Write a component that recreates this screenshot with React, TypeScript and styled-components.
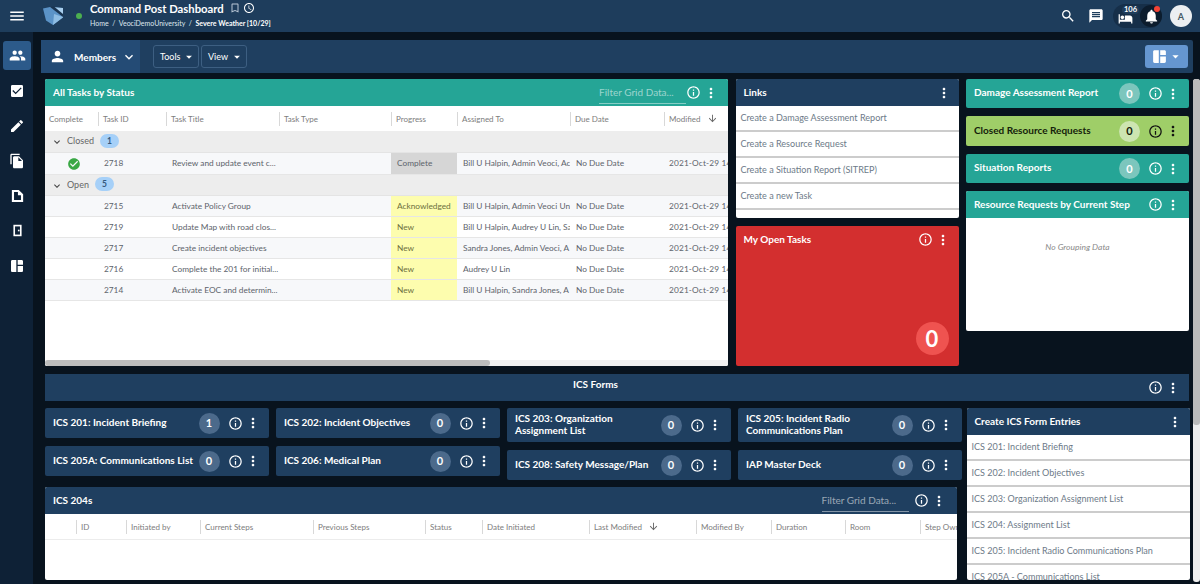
import React from 'react';
import styled, { createGlobalStyle } from 'styled-components';
import {
  MdMenu, MdSearch, MdMessage, MdHotel, MdNotifications, MdPeople, MdCheckBox, MdEdit, MdFileCopy,
  MdSpaceDashboard, MdPerson, MdKeyboardArrowDown, MdArrowDropDown, MdInfoOutline, MdMoreVert,
  MdCheckCircle, MdArrowDownward, MdBookmarkBorder, MdOutlineAccessTime,
} from 'react-icons/md';

const NAVY = '#1f3f60';
const TEAL = '#25a596';
const GREEN = '#9fce68';
const RED = '#d32f2f';

const GlobalStyle = createGlobalStyle`
  html, body { margin: 0; padding: 0; background: #08131e; overflow: hidden; }
  body { font-family: Lato, "Open Sans", sans-serif; }
  * { box-sizing: border-box; }
`;

const Page = styled.div`
  width: 1200px;
  height: 584px;
  display: flex;
  flex-direction: column;
  overflow: hidden;
`;

const Header = styled.header`
  height: 32px;
  flex: none;
  display: flex;
  align-items: center;
  background: #1e3d5c;
  color: #fff;
  padding-right: 8px;
`;

const MenuSlot = styled.div`
  width: 43px;
  display: flex;
  padding-left: 8px;
  font-size: 18px;
`;

const LogoSvg = styled.svg`
  width: 20px;
  height: 20px;
  flex: none;
`;

const StatusDot = styled.span`
  width: 6px;
  height: 6px;
  border-radius: 50%;
  background: #4caf50;
  margin: 0 8px 0 13px;
  flex: none;
`;

const TitleBlock = styled.div`
  display: flex;
  flex-direction: column;
  flex: 1;
  margin-top: -3px;
`;

const TitleRow = styled.div`
  display: flex;
  align-items: center;
  gap: 2px;
  font-size: 11.3px;
  font-weight: 700;
  line-height: 15px;
  svg { font-size: 12px; }
  svg:first-of-type { margin-left: 3px; color: #b9c7d6; }
`;

const Crumbs = styled.div`
  font-size: 7px;
  line-height: 11px;
  margin-top: 2px;
  color: #dfe7ef;
  b { color: #fff; }
`;

const HeaderIcon = styled.div<{ $gap?: number }>`
  display: flex;
  font-size: 16px;
  margin-right: ${p => p.$gap ?? 12}px;
`;

const NotifyPill = styled.div`
  width: 49px;
  height: 24px;
  border-radius: 12px;
  background: #162f49;
  display: flex;
  align-items: center;
  justify-content: space-between;
  padding-left: 5px;
  margin-right: 8px;
  position: relative;
`;

const BedCount = styled.span`
  position: absolute;
  left: 9px;
  top: 2px;
  font-size: 7.5px;
  font-weight: 700;
  line-height: 8px;
  background: #1e3d5c;
  border-radius: 4px;
  padding: 0 2px;
`;

const BedIcon = styled.div`
  display: flex;
  font-size: 15px;
  margin-top: 5px;
`;

const BellCircle = styled.div`
  width: 22px;
  height: 22px;
  border-radius: 50%;
  background: #0c1c2d;
  display: flex;
  align-items: center;
  justify-content: center;
  font-size: 17px;
  position: relative;
`;

const RedDot = styled.span`
  position: absolute;
  top: 1px;
  right: 2px;
  width: 6px;
  height: 6px;
  border-radius: 50%;
  background: #f44336;
`;

const Avatar = styled.div`
  width: 22px;
  height: 22px;
  border-radius: 50%;
  background: #eceff1;
  color: #455a64;
  font-size: 9px;
  font-weight: 700;
  display: flex;
  align-items: center;
  justify-content: center;
`;

const Body = styled.div`
  flex: 1;
  display: flex;
  min-height: 0;
`;

const Sidebar = styled.nav`
  width: 33px;
  flex: none;
  background: #0e2136;
  padding: 9px 2px 0 3px;
  display: flex;
  flex-direction: column;
  gap: 6px;
`;

const SideItem = styled.div<{ $active?: boolean }>`
  height: 29px;
  border-radius: 3px;
  display: flex;
  align-items: center;
  justify-content: center;
  color: #fff;
  font-size: ${p => (p.$active ? 17 : 16)}px;
  background: ${p => (p.$active ? '#2c5a8a' : 'transparent')};
`;

const Main = styled.main`
  flex: 1;
  min-width: 0;
  padding-top: 8px;
  padding-left: 8px;
  display: flex;
  flex-direction: column;
`;

const Toolbar = styled.div`
  width: 1152px;
  height: 33px;
  flex: none;
  background: ${NAVY};
  border-radius: 2px;
  display: flex;
  align-items: center;
  color: #fff;
  padding-right: 5px;
`;

const MembersTab = styled.div`
  width: 99px;
  height: 100%;
  background: #244b75;
  display: flex;
  align-items: center;
  padding-left: 8px;
  font-size: 10px;
  font-weight: 700;
  margin-right: 13px;
  svg:first-child { font-size: 17px; margin-right: 8px; }
  svg:last-child { font-size: 16px; margin-left: 5px; }
`;

const ToolButton = styled.div`
  width: 46px;
  height: 23px;
  border: 1px solid #3d5f82;
  border-radius: 3px;
  display: flex;
  align-items: center;
  justify-content: space-between;
  padding: 0 2px 0 6px;
  margin-right: 2px;
  font-size: 9px;
  svg { font-size: 14px; }
`;

const LayoutButton = styled.div`
  width: 43px;
  height: 23px;
  margin-left: auto;
  border-radius: 3px;
  background: #6596d0;
  display: flex;
  align-items: center;
  justify-content: center;
  svg:first-child { font-size: 17px; }
  svg:last-child { font-size: 15px; }
`;

const Workspace = styled.div`
  flex: 1;
  min-height: 0;
  display: flex;
  padding-top: 6px;
`;

const Content = styled.div`
  width: 1152px;
  padding: 0 4px;
  display: flex;
  flex-direction: column;
`;

const ScrollTrack = styled.div`
  width: 7px;
  margin-bottom: 2px;
  border-radius: 3px;
  background: #eeeeee;
`;

const ScrollThumb = styled.div`
  height: 346px;
  border-radius: 3px;
  background: #bbbbbb;
`;

const TopGrid = styled.div`
  height: 287px;
  flex: none;
  display: grid;
  grid-template-columns: 683px 223px 223px;
  column-gap: 7.5px;
`;

const Panel = styled.section<{ $height?: number }>`
  background: #fff;
  border-radius: 2px;
  overflow: hidden;
  display: flex;
  flex-direction: column;
  ${p => (p.$height ? `height: ${p.$height}px; flex: none;` : '')}
`;

const toneBg = { teal: TEAL, green: GREEN, navy: NAVY, red: RED };
type Tone = keyof typeof toneBg;

const PanelHead = styled.div<{ $tone: Tone }>`
  height: 27px;
  flex: none;
  background: ${p => toneBg[p.$tone]};
  color: #fff;
  display: flex;
  align-items: center;
  padding-left: 8px;
  font-size: 10px;
  font-weight: 700;
`;

const HeadTitle = styled.div`
  flex: 1;
  margin-top: -2px;
  white-space: nowrap;
`;

const FilterText = styled.div`
  width: 87px;
  height: 22px;
  border-bottom: 1px solid rgba(255, 255, 255, 0.45);
  color: rgba(255, 255, 255, 0.55);
  font-size: 10px;
  font-weight: 400;
  line-height: 21px;
  white-space: nowrap;
  overflow: hidden;
`;

const Actions = styled.div<{ $dark?: boolean; $lead?: number; $width?: number }>`
  width: ${p => p.$width ?? 43}px;
  flex: none;
  display: flex;
  align-items: center;
  color: ${p => (p.$dark ? '#111' : '#fff')};
  padding-left: ${p => p.$lead ?? 2}px;
`;

const MenuOnly = styled.div`
  width: 25px;
  flex: none;
  display: flex;
  color: #fff;
`;

const InfoIcon = styled(MdInfoOutline)`
  font-size: 15px;
  flex: none;
`;

const KebabIcon = styled(MdMoreVert)`
  font-size: 16px;
  flex: none;
  margin-left: 2px;
`;

const Columns = styled.div<{ $cols: string }>`
  display: grid;
  grid-template-columns: ${p => p.$cols};
  width: max-content;
`;

const HeadRow = styled(Columns)<{ $height: number; $rule?: boolean }>`
  height: ${p => p.$height}px;
  align-items: center;
  color: #7d7d7d;
  font-size: 8px;
  border-bottom: ${p => (p.$rule ? '1px solid #ececec' : 'none')};
`;

const HeadCell = styled.div<{ $first?: boolean }>`
  height: 14px;
  line-height: 14px;
  padding-left: 4px;
  white-space: nowrap;
  overflow: hidden;
  display: flex;
  align-items: center;
  gap: 6px;
  border-left: ${p => (p.$first ? 'none' : '1px solid #d8d8d8')};
  svg { font-size: 11px; color: #666; }
`;

const TableBody = styled.div`
  flex: 1;
  min-height: 0;
  overflow: hidden;
`;

const GroupRow = styled.div<{ $height: number }>`
  height: ${p => p.$height}px;
  width: 760px;
  background: #ededed;
  border-bottom: 1px solid #e4e4e4;
  display: flex;
  align-items: center;
  padding-left: 6px;
  padding-bottom: 2px;
  color: #666;
  font-size: 9px;
  svg { font-size: 12px; margin-right: 4px; margin-top: 3px; color: #444; }
`;

const GroupBadge = styled.span`
  width: 19px;
  height: 14px;
  border-radius: 7px;
  background: #a6d0f8;
  color: #35597c;
  font-size: 8.5px;
  font-weight: 700;
  text-align: center;
  line-height: 14px;
  margin-left: 6px;
`;

const DataRow = styled(Columns)<{ $height: number; $alt: boolean }>`
  height: ${p => p.$height}px;
  background: ${p => (p.$alt ? '#f7f8fa' : '#fff')};
  border-bottom: 1px solid #e6e6e6;
  color: #5d636b;
  font-size: 8.3px;
  line-height: 20px;
`;

const Cell = styled.div`
  padding-left: 6px;
  white-space: nowrap;
  overflow: hidden;
`;

const DateCell = styled(Cell)`
  padding-left: 5px;
  letter-spacing: 0.15px;
`;

const CheckCell = styled.div`
  display: flex;
  align-items: center;
  justify-content: center;
  padding-left: 5px;
  color: #3aa845;
  font-size: 14px;
`;

const ProgressCell = styled(Cell)<{ $done: boolean }>`
  background: ${p => (p.$done ? '#d6d6d6' : '#fdfdae')};
  color: ${p => (p.$done ? '#5d636b' : '#6d7140')};
`;

const HScroll = styled.div`
  height: 6px;
  flex: none;
  background: #f1f1f1;
`;

const HThumb = styled.div`
  width: 445px;
  height: 100%;
  background: #bdbdbd;
  border-radius: 3px;
`;

const Stack = styled.div`
  display: flex;
  flex-direction: column;
  gap: 8px;
`;

const LinkRow = styled.div`
  height: 26px;
  flex: none;
  border-bottom: 2px solid #cccccc;
  color: #6d7a88;
  font-size: 9.05px;
  line-height: 24px;
  padding-left: 5px;
  white-space: nowrap;
  overflow: hidden;
`;

const BigCard = styled.section`
  height: 140px;
  background: ${RED};
  border-radius: 2px;
  display: flex;
  flex-direction: column;
  color: #fff;
  font-size: 10px;
  font-weight: 700;
`;

const BigCardHead = styled.div`
  display: flex;
  align-items: center;
  height: 27px;
  padding-left: 8px;
`;

const BigCount = styled.div`
  width: 33px;
  height: 33px;
  margin: auto 10px 11px auto;
  border-radius: 50%;
  background: #ef5350;
  display: flex;
  align-items: center;
  justify-content: center;
  font-size: 22px;
`;

const Card = styled.div<{ $tone: Tone; $height: number }>`
  height: ${p => p.$height}px;
  flex: none;
  background: ${p => toneBg[p.$tone]};
  color: ${p => (p.$tone === 'green' ? '#14210a' : '#fff')};
  border-radius: 2px;
  display: flex;
  align-items: center;
  padding-left: 8px;
  font-size: 10px;
  font-weight: 700;
  line-height: 12px;
`;

const CardTitle = styled.div`
  flex: 1;
  min-width: 0;
  margin-top: -3px;
`;

const Count = styled.div<{ $tone: Tone }>`
  width: 21px;
  height: 21px;
  flex: none;
  border-radius: 50%;
  margin-right: 6px;
  background: ${p => (p.$tone === 'navy' ? '#4c6a8b' : p.$tone === 'green' ? '#cde5b1' : '#7cc6bd')};
  display: flex;
  align-items: center;
  justify-content: center;
  font-size: 11px;
`;

const EmptyNote = styled.div`
  padding-top: 24px;
  text-align: center;
  color: #8a8a8a;
  font-size: 8.5px;
  font-style: italic;
`;

const FormsBar = styled.div`
  height: 27px;
  flex: none;
  margin-top: 8px;
  background: ${NAVY};
  color: #fff;
  display: flex;
  align-items: center;
  font-size: 10px;
  font-weight: 700;
`;

const FormsTitle = styled.div`
  flex: 1;
  text-align: center;
  margin-top: -7px;
`;

const BottomRow = styled.div`
  flex: 1;
  min-height: 0;
  display: flex;
  margin-top: 7px;
  margin-bottom: 4px;
`;

const LeftArea = styled.div`
  width: 921.5px;
  flex: none;
  display: flex;
  flex-direction: column;
`;

const CardColumns = styled.div`
  display: flex;
  gap: 7.5px;
  height: 72px;
  flex: none;
`;

const CardColumn = styled(Stack)`
  width: 223.5px;
  flex: none;
`;

const Ics204 = styled(Panel)`
  width: 911.5px;
  flex: 1;
  margin-top: 7px;
  min-height: 0;
`;

const CreatePanel = styled(Panel)`
  width: 223px;
  flex: none;
`;

const Logo = () => (
  <LogoSvg viewBox="0 0 20 20">
    <polygon points="0,2.5 7,1 20,2 20,11 10,19 3,14.5" fill="#5b93c7" />
    <polygon points="7,1 20,2 20,9" fill="#a9cfee" />
    <polygon points="7,1 11,0.5 20,8 20,11" fill="#1a3450" />
    <polygon points="11,8 20,11 20,11.5 10,19" fill="#8fbde3" />
  </LogoSvg>
);

const DocIcon = () => (
  <svg width="13" height="14" viewBox="0 0 15 16">
    <path d="M1 1h8l5 5v9H1z" fill="#fff" />
    <path d="M3.5 3.5h4.5V7h3.5v5.5H3.5z" fill="#0e2136" />
  </svg>
);

const DoorIcon = () => (
  <svg width="9" height="13" viewBox="0 0 11 15">
    <rect x="0.5" y="0.5" width="10" height="14" fill="#fff" />
    <rect x="2.5" y="2.5" width="6" height="10" fill="#0e2136" />
    <rect x="6" y="6.5" width="2" height="2" fill="#fff" />
  </svg>
);

const taskCols = '53px 68px 113px 112px 66px 113px 94px 113px';
const taskHeads = ['Complete', 'Task ID', 'Task Title', 'Task Type', 'Progress', 'Assigned To', 'Due Date', 'Modified'];

const gridCols = '31px 50px 74px 113px 112px 57px 107px 107px 75px 74px 75px 60px';
const gridHeads = ['', 'ID', 'Initiated by', 'Current Steps', 'Previous Steps', 'Status', 'Date Initiated', 'Last Modified', 'Modified By', 'Duration', 'Room', 'Step Owner'];

const openTasks = [
  { id: '2715', title: 'Activate Policy Group', progress: 'Acknowledged', who: 'Bill U Halpin, Admin Veoci Un' },
  { id: '2719', title: 'Update Map with road clos...', progress: 'New', who: 'Bill U Halpin, Audrey U Lin, Sa' },
  { id: '2717', title: 'Create incident objectives', progress: 'New', who: 'Sandra Jones, Admin Veoci, A' },
  { id: '2716', title: 'Complete the 201 for initial...', progress: 'New', who: 'Audrey U Lin' },
  { id: '2714', title: 'Activate EOC and determin...', progress: 'New', who: 'Bill U Halpin, Sandra Jones, A' },
];

const TaskRow = (t: { id: string; title: string; progress: string; who: string; done?: boolean; alt: boolean; height: number }) => (
  <DataRow $cols={taskCols} $height={t.height} $alt={t.alt}>
    <CheckCell>{t.done && <MdCheckCircle />}</CheckCell>
    <Cell>{t.id}</Cell>
    <Cell>{t.title}</Cell>
    <Cell />
    <ProgressCell $done={!!t.done}>{t.progress}</ProgressCell>
    <Cell>{t.who}</Cell>
    <Cell>No Due Date</Cell>
    <DateCell>2021-Oct-29 14</DateCell>
  </DataRow>
);

const StatCard = ({ title, tone, height, count }: { title: React.ReactNode; tone: Tone; height: number; count: number }) => (
  <Card $tone={tone} $height={height}>
    <CardTitle>{title}</CardTitle>
    <Count $tone={tone}>{count}</Count>
    <Actions $dark={tone === 'green'}><InfoIcon /><KebabIcon /></Actions>
  </Card>
);

export default function App() {
  return (
    <Page>
      <GlobalStyle />
      <Header>
        <MenuSlot><MdMenu /></MenuSlot>
        <Logo />
        <StatusDot />
        <TitleBlock>
          <TitleRow>Command Post Dashboard <MdBookmarkBorder /><MdOutlineAccessTime /></TitleRow>
          <Crumbs>Home &nbsp;/&nbsp; VeociDemoUniversity &nbsp;/&nbsp; <b>Severe Weather [10/29]</b></Crumbs>
        </TitleBlock>
        <HeaderIcon><MdSearch /></HeaderIcon>
        <HeaderIcon $gap={9}><MdMessage /></HeaderIcon>
        <NotifyPill>
          <BedIcon><MdHotel /></BedIcon>
          <BedCount>106</BedCount>
          <BellCircle><MdNotifications /><RedDot /></BellCircle>
        </NotifyPill>
        <Avatar>A</Avatar>
      </Header>
      <Body>
        <Sidebar>
          <SideItem $active><MdPeople /></SideItem>
          <SideItem><MdCheckBox /></SideItem>
          <SideItem><MdEdit /></SideItem>
          <SideItem><MdFileCopy /></SideItem>
          <SideItem><DocIcon /></SideItem>
          <SideItem><DoorIcon /></SideItem>
          <SideItem><MdSpaceDashboard /></SideItem>
        </Sidebar>
        <Main>
          <Toolbar>
            <MembersTab><MdPerson />Members<MdKeyboardArrowDown /></MembersTab>
            <ToolButton>Tools<MdArrowDropDown /></ToolButton>
            <ToolButton>View<MdArrowDropDown /></ToolButton>
            <LayoutButton><MdSpaceDashboard /><MdArrowDropDown /></LayoutButton>
          </Toolbar>
          <Workspace>
            <Content>
              <TopGrid>
                <Panel>
                  <PanelHead $tone="teal">
                    <HeadTitle>All Tasks by Status</HeadTitle>
                    <FilterText>Filter Grid Data...</FilterText>
                    <Actions $lead={0} $width={42}><InfoIcon /><KebabIcon /></Actions>
                  </PanelHead>
                  <TableBody>
                    <HeadRow $cols={taskCols} $height={25}>
                      {taskHeads.map((h, i) => (
                        <HeadCell key={h} $first={i === 0}>{h}{h === 'Modified' && <MdArrowDownward />}</HeadCell>
                      ))}
                    </HeadRow>
                    <GroupRow $height={22}><MdKeyboardArrowDown />Closed<GroupBadge>1</GroupBadge></GroupRow>
                    <TaskRow id="2718" title="Review and update event c..." progress="Complete" who="Bill U Halpin, Admin Veoci, Ac" done alt height={22} />
                    <GroupRow $height={21}><MdKeyboardArrowDown />Open<GroupBadge>5</GroupBadge></GroupRow>
                    {openTasks.map((t, i) => (
                      <TaskRow key={t.id} {...t} alt={i % 2 === 0} height={21} />
                    ))}
                  </TableBody>
                  <HScroll><HThumb /></HScroll>
                </Panel>
                <Stack>
                  <Panel $height={139}>
                    <PanelHead $tone="navy">
                      <HeadTitle>Links</HeadTitle>
                      <MenuOnly><KebabIcon /></MenuOnly>
                    </PanelHead>
                    <LinkRow>Create a Damage Assessment Report</LinkRow>
                    <LinkRow>Create a Resource Request</LinkRow>
                    <LinkRow>Create a Situation Report (SITREP)</LinkRow>
                    <LinkRow>Create a new Task</LinkRow>
                  </Panel>
                  <BigCard>
                    <BigCardHead>
                      <HeadTitle>My Open Tasks</HeadTitle>
                      <Actions><InfoIcon /><KebabIcon /></Actions>
                    </BigCardHead>
                    <BigCount>0</BigCount>
                  </BigCard>
                </Stack>
                <Stack>
                  <StatCard title="Damage Assessment Report" tone="teal" height={29} count={0} />
                  <StatCard title="Closed Resource Requests" tone="green" height={30} count={0} />
                  <StatCard title="Situation Reports" tone="teal" height={29} count={0} />
                  <Panel $height={140}>
                    <PanelHead $tone="teal">
                      <HeadTitle>Resource Requests by Current Step</HeadTitle>
                      <Actions><InfoIcon /><KebabIcon /></Actions>
                    </PanelHead>
                    <EmptyNote>No Grouping Data</EmptyNote>
                  </Panel>
                </Stack>
              </TopGrid>
              <FormsBar>
                <FormsTitle>ICS Forms</FormsTitle>
                <Actions><InfoIcon /><KebabIcon /></Actions>
              </FormsBar>
              <BottomRow>
                <LeftArea>
                  <CardColumns>
                    <CardColumn>
                      <StatCard title="ICS 201: Incident Briefing" tone="navy" height={30} count={1} />
                      <StatCard title="ICS 205A: Communications List" tone="navy" height={30} count={0} />
                    </CardColumn>
                    <CardColumn>
                      <StatCard title="ICS 202: Incident Objectives" tone="navy" height={30} count={0} />
                      <StatCard title="ICS 206: Medical Plan" tone="navy" height={30} count={0} />
                    </CardColumn>
                    <CardColumn>
                      <StatCard title="ICS 203: Organization Assignment List" tone="navy" height={34} count={0} />
                      <StatCard title="ICS 208: Safety Message/Plan" tone="navy" height={30} count={0} />
                    </CardColumn>
                    <CardColumn>
                      <StatCard title="ICS 205: Incident Radio Communications Plan" tone="navy" height={34} count={0} />
                      <StatCard title="IAP Master Deck" tone="navy" height={30} count={0} />
                    </CardColumn>
                  </CardColumns>
                  <Ics204>
                    <PanelHead $tone="navy">
                      <HeadTitle>ICS 204s</HeadTitle>
                      <FilterText>Filter Grid Data...</FilterText>
                      <Actions $lead={5} $width={48}><InfoIcon /><KebabIcon /></Actions>
                    </PanelHead>
                    <TableBody>
                      <HeadRow $cols={gridCols} $height={26} $rule>
                        {gridHeads.map((h, i) => (
                          <HeadCell key={h || 'select'} $first={i === 0}>{h}{h === 'Last Modified' && <MdArrowDownward />}</HeadCell>
                        ))}
                      </HeadRow>
                    </TableBody>
                  </Ics204>
                </LeftArea>
                <CreatePanel>
                  <PanelHead $tone="navy">
                    <HeadTitle>Create ICS Form Entries</HeadTitle>
                    <MenuOnly><KebabIcon /></MenuOnly>
                  </PanelHead>
                  <LinkRow>ICS 201: Incident Briefing</LinkRow>
                  <LinkRow>ICS 202: Incident Objectives</LinkRow>
                  <LinkRow>ICS 203: Organization Assignment List</LinkRow>
                  <LinkRow>ICS 204: Assignment List</LinkRow>
                  <LinkRow>ICS 205: Incident Radio Communications Plan</LinkRow>
                  <LinkRow>ICS 205A - Communications List</LinkRow>
                </CreatePanel>
              </BottomRow>
            </Content>
            <ScrollTrack><ScrollThumb /></ScrollTrack>
          </Workspace>
        </Main>
      </Body>
    </Page>
  );
}
